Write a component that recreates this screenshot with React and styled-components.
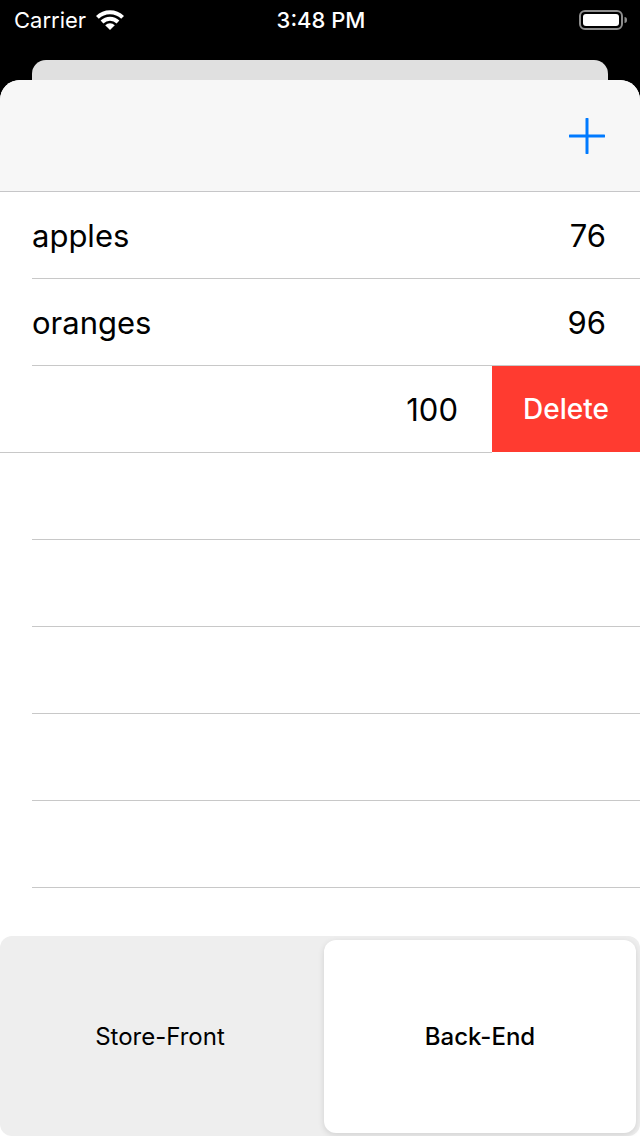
import React from "react";
import styled, { createGlobalStyle } from "styled-components";

const GlobalStyle = createGlobalStyle`
    html, body {
        margin: 0;
        padding: 0;
        background: #000;
        font-family: Inter, "Noto Sans", sans-serif;
        -webkit-font-smoothing: antialiased;
    }
`;

const Page = styled.div`
    width: 640px;
    height: 1136px;
    display: flex;
    flex-direction: column;
    background: #000;
    overflow: hidden;
`;

const StatusBar = styled.div`
    height: 40px;
    display: grid;
    grid-template-columns: 1fr auto 1fr;
    align-items: center;
    padding: 0 12px 0 14px;
    color: #fff;
    font-size: 22px;
`;

const StatusLeft = styled.div`
    display: flex;
    align-items: center;
    gap: 8px;
`;

const StatusTime = styled.div`
    font-weight: 500;
`;

const StatusRight = styled.div`
    display: flex;
    justify-content: flex-end;
`;

const BackCard = styled.div`
    height: 20px;
    margin: 20px 32px 0;
    background: #e0e0e0;
    border-radius: 14px 14px 0 0;
`;

const Sheet = styled.div`
    flex: 1;
    display: flex;
    flex-direction: column;
    background: #fff;
    border-radius: 20px 20px 0 0;
    overflow: hidden;
`;

const NavBar = styled.div`
    height: 112px;
    box-sizing: border-box;
    display: flex;
    align-items: center;
    justify-content: flex-end;
    padding: 0 35px 0 0;
    background: #f7f7f7;
    border-bottom: 1px solid #c6c6c8;
`;

const AddButton = styled.button`
    border: 0;
    background: none;
    padding: 0;
    display: flex;
    cursor: pointer;
`;

const List = styled.div`
    flex: 1;
    overflow: hidden;
`;

const RowWrap = styled.div`
    position: relative;
    height: 87px;
    overflow: hidden;
`;

const Row = styled.div`
    height: 87px;
    box-sizing: border-box;
    margin-left: 32px;
    padding-right: 34px;
    display: flex;
    align-items: center;
    justify-content: space-between;
    border-bottom: 1px solid #c8c8c8;
    font-size: 31px;
    color: #000;
    transform: translateX(${(p) => (p.$swiped ? "-148px" : "0")});
`;

const DeleteAction = styled.div`
    position: absolute;
    top: 0;
    right: 0;
    width: 148px;
    height: 86px;
    display: flex;
    align-items: center;
    justify-content: center;
    background: #ff3b30;
    color: #fff;
    font-size: 28px;
    font-weight: 500;
`;

const TabBar = styled.div`
    height: 200px;
    box-sizing: border-box;
    display: grid;
    grid-template-columns: 1fr 1fr;
    gap: 8px;
    padding: 4px 4px 3px 4px;
    background: #eeeeee;
    border-radius: 12px;
`;

const Segment = styled.div`
    display: flex;
    align-items: center;
    justify-content: center;
    font-size: 24px;
    font-weight: ${(p) => (p.$active ? 500 : 400)};
    color: #000;
    border-radius: 12px;
    background: ${(p) => (p.$active ? "#fff" : "transparent")};
    box-shadow: ${(p) => (p.$active ? "0 2px 6px rgba(0,0,0,0.12)" : "none")};
`;

const Wifi = () => (
    <svg width="32" height="24" viewBox="0 0 32 24">
        <path d="M16 22 L11.2 17.2 A7 7 0 0 1 20.8 17.2 Z" fill="#fff" />
        <path d="M6.6 12.6 A13.5 13.5 0 0 1 25.4 12.6 L22.6 15.4 A9.5 9.5 0 0 0 9.4 15.4 Z" fill="#fff" />
        <path d="M2 8 A20 20 0 0 1 30 8 L27.2 10.8 A16 16 0 0 0 4.8 10.8 Z" fill="#fff" />
    </svg>
);

const Battery = () => (
    <svg width="50" height="24" viewBox="0 0 50 24">
        <rect x="2" y="3" width="42" height="18" rx="5" fill="none" stroke="#8e8e8e" strokeWidth="2" />
        <rect x="5" y="6" width="36" height="12" rx="3" fill="#fff" />
        <path d="M46.5 9 A2.5 3 0 0 1 46.5 15 Z" fill="#8e8e8e" />
    </svg>
);

const Plus = () => (
    <svg width="36" height="36" viewBox="0 0 36 36">
        <path d="M18 1 V35 M1 18 H35" stroke="#007aff" strokeWidth="3" strokeLinecap="round" />
    </svg>
);

const items = [
    { name: "apples", qty: 76 },
    { name: "oranges", qty: 96 },
    { name: "", qty: 100, swiped: true },
    { name: "", qty: "" },
    { name: "", qty: "" },
    { name: "", qty: "" },
    { name: "", qty: "" },
    { name: "", qty: "" },
];

const App = () => (
    <Page>
        <GlobalStyle />
        <StatusBar>
            <StatusLeft>
                <span>Carrier</span>
                <Wifi />
            </StatusLeft>
            <StatusTime>3:48 PM</StatusTime>
            <StatusRight>
                <Battery />
            </StatusRight>
        </StatusBar>
        <BackCard />
        <Sheet>
            <NavBar>
                <AddButton aria-label="Add">
                    <Plus />
                </AddButton>
            </NavBar>
            <List>
                {items.map((item, i) => (
                    <RowWrap key={i}>
                        <Row $swiped={item.swiped}>
                            <span>{item.name}</span>
                            <span>{item.qty}</span>
                        </Row>
                        {item.swiped && <DeleteAction>Delete</DeleteAction>}
                    </RowWrap>
                ))}
            </List>
            <TabBar>
                <Segment>Store-Front</Segment>
                <Segment $active>Back-End</Segment>
            </TabBar>
        </Sheet>
    </Page>
);

export default App;
